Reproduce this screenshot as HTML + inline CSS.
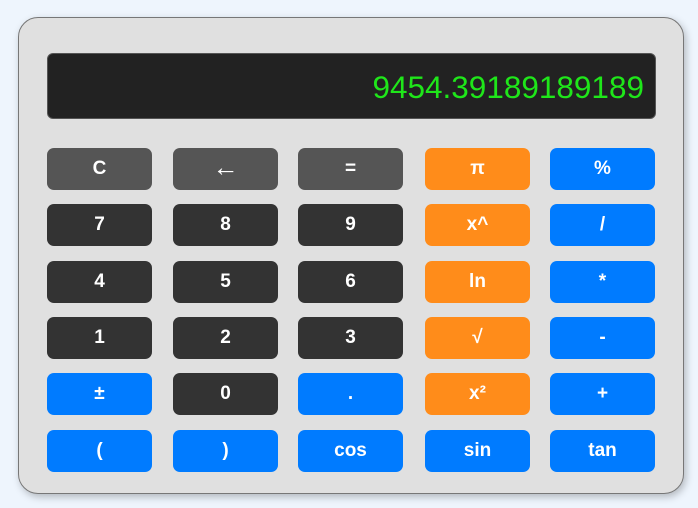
<!DOCTYPE html>
<html><head><style>
html,body{margin:0;padding:0;width:698px;height:508px;background:#eef5fd;overflow:hidden;font-family:"Liberation Sans",Arial,sans-serif}
.calc{position:absolute;left:18px;top:17px;width:664px;height:475px;background:#e0e0e0;border:1px solid #777;border-radius:20px;box-shadow:2px 3px 8px rgba(0,0,0,.25)}
.disp{position:absolute;left:47px;top:53px;width:609px;height:66px;background:#222;border:1px solid #555;box-sizing:border-box;border-radius:6px;color:#1fe61a;font-size:31.5px;line-height:66px;text-align:right;padding-right:11px}
.b{position:absolute;width:105px;height:42px;border-radius:7px;color:#fff;font-weight:bold;font-size:19px;line-height:42px;text-align:center}
.g{background:#555}.d{background:#333}.o{background:#ff8c1a}.u{background:#007bff}
</style></head><body>
<div class="calc"></div>
<div class="disp">9454.39189189189</div>
<div class="b g" style="left:47px;top:148px">C</div>
<div class="b g" style="left:173px;top:148px;font-size:26px;line-height:38px">←</div>
<div class="b g" style="left:298px;top:148px">=</div>
<div class="b o" style="left:425px;top:148px">π</div>
<div class="b u" style="left:550px;top:148px">%</div>
<div class="b d" style="left:47px;top:204px">7</div>
<div class="b d" style="left:173px;top:204px">8</div>
<div class="b d" style="left:298px;top:204px">9</div>
<div class="b o" style="left:425px;top:204px">x^</div>
<div class="b u" style="left:550px;top:204px">/</div>
<div class="b d" style="left:47px;top:261px">4</div>
<div class="b d" style="left:173px;top:261px">5</div>
<div class="b d" style="left:298px;top:261px">6</div>
<div class="b o" style="left:425px;top:261px">ln</div>
<div class="b u" style="left:550px;top:261px">*</div>
<div class="b d" style="left:47px;top:317px">1</div>
<div class="b d" style="left:173px;top:317px">2</div>
<div class="b d" style="left:298px;top:317px">3</div>
<div class="b o" style="left:425px;top:317px">√</div>
<div class="b u" style="left:550px;top:317px">-</div>
<div class="b u" style="left:47px;top:373px">±</div>
<div class="b d" style="left:173px;top:373px">0</div>
<div class="b u" style="left:298px;top:373px">.</div>
<div class="b o" style="left:425px;top:373px">x²</div>
<div class="b u" style="left:550px;top:373px">+</div>
<div class="b u" style="left:47px;top:430px">(</div>
<div class="b u" style="left:173px;top:430px">)</div>
<div class="b u" style="left:298px;top:430px">cos</div>
<div class="b u" style="left:425px;top:430px">sin</div>
<div class="b u" style="left:550px;top:430px">tan</div>
</body></html>
